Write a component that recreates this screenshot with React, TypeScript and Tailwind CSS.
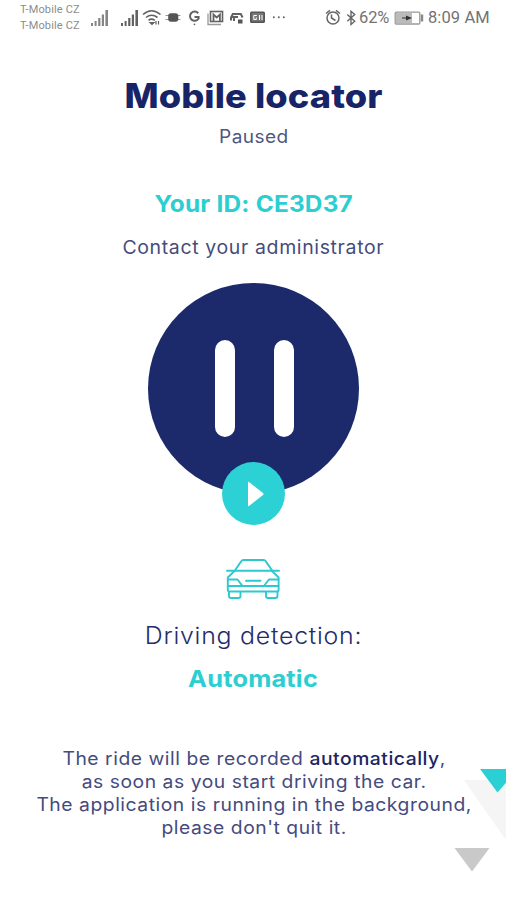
import React from "react";

function SignalBars({ className }: { className: string }) {
  return (
    <svg viewBox="0 0 18 16" className={className} fill="currentColor">
      <rect x="0" y="13" width="2" height="3" />
      <rect x="3.6" y="11" width="2" height="5" />
      <rect x="7.2" y="8" width="2.2" height="8" />
      <rect x="10.8" y="4.5" width="2.2" height="11.5" />
      <rect x="14.4" y="0" width="2.6" height="16" />
    </svg>
  );
}

function StatusIcons() {
  return (
    <svg viewBox="142 0 148 36" className="h-9 w-[148px] shrink-0" fill="none" stroke="#626262" strokeWidth="1.6">
      <path d="M143 14.500Q151.500 7 160.500 14.500M146 17.500Q151.500 13 157.500 17.500M148.500 20.300Q151.500 18 154.800 20.300" />
      <path d="M150 22.500l2 2 2-2zM156 21v3.500M158.500 21v3.500" strokeWidth="1.200" fill="#626262" />
      <path d="M165.500 15.500h15M165.500 19.500h15" strokeWidth="1.100" stroke="#999" />
      <rect x="169" y="14" width="8.500" height="7" rx="2" fill="#555" stroke="#555" />
      <path d="M198.200 13.300A4.600 4.600 0 1 0 198.600 18.500V17H194.500" strokeWidth="2" />
      <circle cx="194.500" cy="24.300" r=".9" fill="#626262" stroke="none" />
      <path d="M208 13.500V24.500H221" stroke="#999" strokeWidth="1.300" />
      <rect x="210.500" y="11.500" width="12" height="10" />
      <path d="M213.500 21V14.500l3.200 3 3.200-3V21" strokeWidth="1.800" />
      <path d="M231 20.500v-3l1.800-3.500h8l1.800 3.500M231 17h7M234 17v4" strokeWidth="2" />
      <rect x="238" y="19.500" width="4.500" height="4" fill="#555" stroke="none" />
      <rect x="250.800" y="12.300" width="13.400" height="10" rx=".8" fill="#777" stroke="#555" />
      <path d="M256.800 15.500h-3v4h2.500v-2M259.500 15v5M262 15v5" stroke="#fff" strokeWidth="1" />
      <g fill="#626262" stroke="none">
        <circle cx="273.800" cy="17.300" r="1" />
        <circle cx="278.800" cy="17.300" r="1" />
        <circle cx="283.800" cy="17.300" r="1" />
      </g>
    </svg>
  );
}

function AlarmAndBluetooth() {
  return (
    <svg viewBox="324 0 34 36" className="ml-[34px] h-9 w-[34px] shrink-0" fill="none" stroke="#666" strokeWidth="1.500">
      <circle cx="333" cy="18" r="6" />
      <path d="M331.500 14.500V18l4 2.500M326 13.500l4-3.200M340 13.500l-4-3.200" />
      <path d="M347.300 14.500l7.400 6.800-3.700 3.200V11.300l3.700 3.200-7.400 6.800" strokeWidth="1.400" />
    </svg>
  );
}

function Battery() {
  return (
    <svg viewBox="394 0 31 36" className="ml-[3px] h-9 w-[31px] shrink-0">
      <rect x="395.200" y="12.200" width="24.600" height="11.800" rx="1" fill="#fff" stroke="#999" strokeWidth="1.300" />
      <rect x="396" y="13" width="16" height="10.200" fill="#bbb" />
      <rect x="420.800" y="14.500" width="2.400" height="7" fill="#888" />
      <path d="M402 17.500h4v-2l6 2.500-6 2.500v-2h-4z" fill="#333" />
    </svg>
  );
}

function Car() {
  return (
    <svg viewBox="0 0 54 40" className="mt-[34px] h-10 w-[54px]" fill="none" stroke="#2cc9cf" strokeWidth="1.900" strokeLinejoin="round" strokeLinecap="round">
      <path d="M8.500 12L15 2.600Q16 1 17.500 1h20Q39 1 40 2.600L46.500 12M1 11.800h52" />
      <path d="M8.500 12L1.800 18.500V31Q1.800 32.500 3.500 32.500h47.400Q52.600 32.500 52.600 31V18.500L46 12" />
      <path d="M2 20.500h9.500l5 6.500M52.400 20.500h-9.500l-5 6.500M2 27h50.400M20 21.800h14.500" />
      <path d="M3 33v4q0 2 2 2h7.500q2 0 2-2v-4M40 33v4q0 2 2 2h7.500q2 0 2-2v-4" />
    </svg>
  );
}

function Decoration() {
  return (
    <svg viewBox="446 760 60 120" className="pointer-events-none absolute right-0 top-[760px] h-[120px] w-[60px]">
      <path d="M464 780H506V840Z" fill="#f5f5f5" />
      <path d="M480 769H518L497.500 792.500Z" fill="#2bd0d5" />
      <path d="M454.500 848H489.500L472 871.500Z" fill="#c9c9c9" />
    </svg>
  );
}

export default function App() {
  return (
    <div className="relative flex h-[900px] w-[506px] flex-col overflow-hidden bg-white font-['Inter',sans-serif] text-[#1c2767]">
      <header className="flex h-9 shrink-0 items-center whitespace-nowrap font-['Roboto',sans-serif] text-[#737373]">
        <div className="ml-5 w-[71px] text-[11px] leading-4 tracking-[0.150px] text-[#8c8c8c]">
          <div>T-Mobile CZ</div>
          <div>T-Mobile CZ</div>
        </div>
        <SignalBars className="h-4 w-[18px] shrink-0 text-[#858585]" />
        <SignalBars className="ml-3 mr-[3px] h-4 w-[18px] shrink-0 text-[#626262]" />
        <StatusIcons />
        <AlarmAndBluetooth />
        <span className="ml-px w-[32px] text-[16.500px] tracking-[-0.100px]">62%</span>
        <Battery />
        <span className="ml-[3px] text-[16.500px] tracking-[0.100px]">8:09 AM</span>
      </header>

      <main className="flex flex-col items-center whitespace-nowrap">
        <h1 className="ml-[2px] mt-9 h-12 scale-x-[1.080] text-[33.500px] font-extrabold leading-[48px] tracking-[0.100px] text-[#172568]">Mobile locator</h1>
        <p className="ml-[2px] h-8 scale-x-[1.060] text-[18px] leading-[34px] tracking-[0.400px] text-[#50577f]">Paused</p>
        <p className="ml-px mt-[35px] h-8 scale-x-[1.060] text-[23px] font-bold leading-[34px] tracking-[0.200px] text-[#2cced2]">Your ID: CE3D37</p>
        <p className="ml-px mt-3 h-8 scale-x-[1.053] text-[18.500px] leading-8 tracking-[0.600px] text-[#454c7b]">Contact your administrator</p>

        <div className="relative mt-5 flex h-[211px] w-[211px] shrink-0 items-center justify-center gap-[39px] rounded-full bg-[#1c2a6b] pl-[2px]">
          <span className="h-[97px] w-5 rounded-full bg-white" />
          <span className="h-[97px] w-5 rounded-full bg-white" />
          <button className="absolute left-[74px] top-[179px] flex h-[63px] w-[63px] items-center justify-center rounded-full bg-[#2bd1d5]" aria-label="Resume">
            <svg viewBox="0 0 17 26" className="ml-[4px] h-[26px] w-[17px]" fill="#fff">
              <path d="M1 1.500Q1 .2 2 1L16 12Q17 13 16 14L2 25Q1 25.800 1 24.500Z" />
            </svg>
          </button>
        </div>

        <div className="h-[31px]" />
        <Car />
        <p className="ml-[2px] mt-[21px] h-8 scale-x-[1.060] text-[23.500px] font-[350] leading-8 tracking-[0.700px] text-[#252c6b]">Driving detection:</p>
        <p className="ml-px mt-[10px] h-8 scale-x-[1.100] text-[23px] font-bold leading-[34px] tracking-[0.200px] text-[#2cced2]">Automatic</p>
        <div className="ml-[2px] mt-[53px] flex scale-x-[1.072] flex-col items-center text-[18px] leading-[23px] tracking-[0.500px] text-[#454b7e]">
          <p>The ride will be recorded <span className="font-medium text-[#1c2464]">automatically</span>,</p>
          <p>as soon as you start driving the car.</p>
          <p>The application is running in the background,</p>
          <p>please don't quit it.</p>
        </div>
      </main>
      <Decoration />
    </div>
  );
}
